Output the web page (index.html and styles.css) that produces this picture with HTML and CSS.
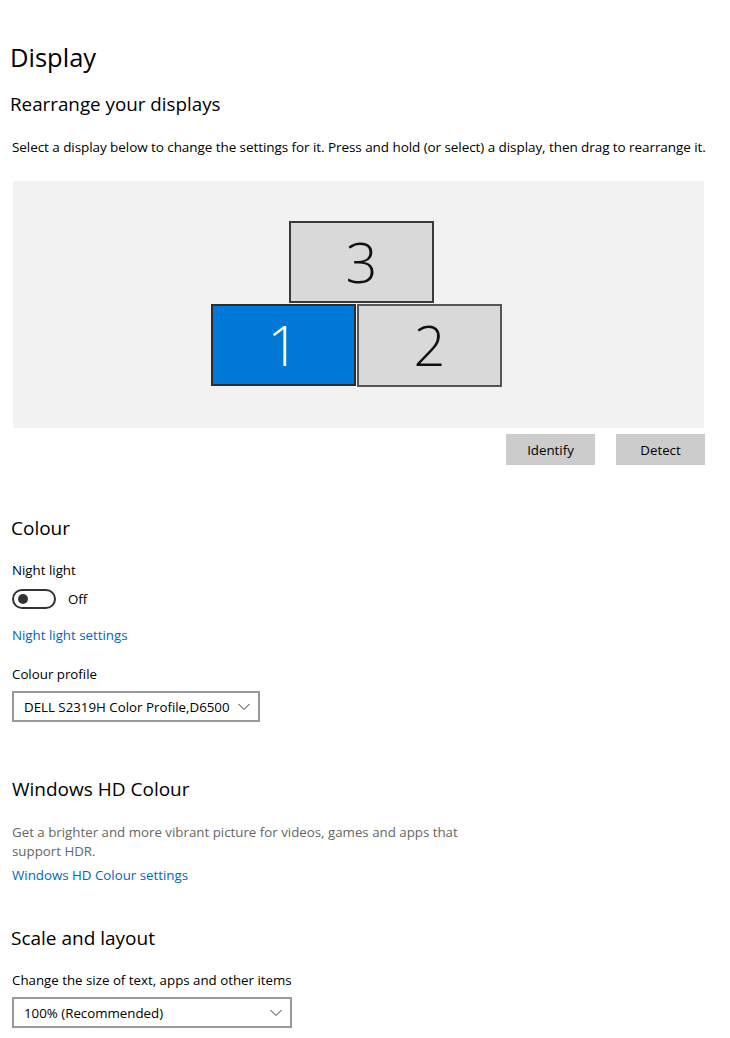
FILE: index.html
```html
<!DOCTYPE html>
<html>
<head>
<meta charset="utf-8">
<link rel="stylesheet" href="styles.css">
</head>
<body>
<div class="page">
  <h1 class="title">Display</h1>
  <h2 class="sub">Rearrange your displays</h2>
  <p class="desc">Select a display below to change the settings for it. Press and hold (or select) a display, then drag to rearrange it.</p>
  <div class="canvas">
    <div class="mon mon3">3</div>
    <div class="mon mon1">1</div>
    <div class="mon mon2">2</div>
  </div>
  <div class="btnrow">
    <button class="btn">Identify</button>
    <button class="btn">Detect</button>
  </div>

  <section class="sec colour">
    <h2 class="sechead">Colour</h2>
    <div class="label nl-label">Night light</div>
    <div class="toggle-row">
      <span class="toggle"><span class="knob"></span></span>
      <span class="toggle-text">Off</span>
    </div>
    <a class="link nl-link">Night light settings</a>
    <div class="label profile-label">Colour profile</div>
    <div class="select sel-profile">
      <span>DELL S2319H Color Profile,D6500</span>
      <svg class="chev" width="12" height="8" viewBox="0 0 12 8"><path d="M0.5 1 L6 6.5 L11.5 1" fill="none" stroke="#333" stroke-width="1"/></svg>
    </div>
  </section>

  <section class="sec hd">
    <h2 class="sechead">Windows HD Colour</h2>
    <p class="gray">Get a brighter and more vibrant picture for videos, games and apps that support HDR.</p>
    <a class="link hd-link">Windows HD Colour settings</a>
  </section>

  <section class="sec scale">
    <h2 class="sechead">Scale and layout</h2>
    <div class="label scale-label">Change the size of text, apps and other items</div>
    <div class="select sel-scale">
      <span>100% (Recommended)</span>
      <svg class="chev" width="12" height="8" viewBox="0 0 12 8"><path d="M0.5 1 L6 6.5 L11.5 1" fill="none" stroke="#333" stroke-width="1"/></svg>
    </div>
  </section>
</div>
</body>
</html>
```
FILE: styles.css
```css
* { box-sizing: border-box; }
html, body { margin: 0; padding: 0; background: #fff; }
body {
  font-family: "Open Sans", "Noto Sans", "Liberation Sans", sans-serif;
  color: #000;
  font-size: 13.3px;
}
.page { padding: 0 0 0 10px; width: 730px; }
.title {
  font-weight: 400;
  font-size: 25.5px;
  margin: 0;
  padding-top: 39px;
  line-height: 36px;
}
.sub {
  font-weight: 400;
  font-size: 18.8px;
  margin: 0;
  padding-top: 16px;
  line-height: 26px;
}
.desc {
  margin: 0;
  padding: 20px 0 0 2px;
  font-size: 13.5px;
  line-height: 20px;
  letter-spacing: -0.07px;
  white-space: nowrap;
}
.canvas {
  position: relative;
  margin: 24px 0 0 3px;
  width: 691px;
  height: 247px;
  background: #f2f2f2;
}
.mon {
  position: absolute;
  width: 145px;
  height: 82px;
  border: 2px solid #3a3a3a;
  background: #d9d9d9;
  font-family: "Open Sans", sans-serif;
  font-weight: 300;
  font-size: 56px;
  line-height: 76px;
  text-align: center;
  color: #111;
}
.mon3 { left: 276px; top: 40px; height: 82px; }
.mon1 { left: 198px; top: 123px; background: #0078d7; color: #fff; border-color: #2d2d2d; }
.mon2 { left: 344px; top: 123px; height: 83px; border-color: #555; }
.btnrow {
  display: flex;
  justify-content: flex-end;
  gap: 21px;
  width: 695px;
  margin-top: 6px;
}
.btn {
  width: 89px;
  height: 31px;
  border: 0;
  background: #cccccc;
  font-family: inherit;
  font-size: 13.3px;
  color: #000;
  padding: 0;
}
.sec { padding-left: 1px; }
.sechead {
  font-weight: 400;
  font-size: 19px;
  margin: 0;
  line-height: 26px;
}
.colour { padding-top: 50px; }
.label { padding-left: 1px; line-height: 18px; }
.nl-label { margin-top: 20px; }
.toggle-row { display: flex; align-items: center; margin: 10px 0 0 1px; }
.toggle {
  width: 44px;
  height: 20px;
  border: 2px solid #333;
  border-radius: 10px;
  display: flex;
  align-items: center;
  padding-left: 4px;
}
.knob { width: 10px; height: 10px; border-radius: 50%; background: #333; }
.toggle-text { margin-left: 12px; }
.link {
  display: block;
  color: #0067c0;
  line-height: 18px;
  padding-left: 1px;
}
.nl-link { margin-top: 17px; }
.profile-label { margin-top: 21px; }
.select {
  margin-left: 1px;
  height: 31px;
  border: 2px solid #999;
  display: flex;
  align-items: center;
  justify-content: space-between;
  padding: 0 8px 0 10px;
}
.sel-profile { width: 248px; margin-top: 8px; }
.sel-scale { width: 280px; margin-top: 8px; }
.hd { padding-top: 54px; padding-left: 2px; }
.gray {
  margin: 21px 0 0 0;
  color: #666;
  width: 470px;
  line-height: 19px;
}
.hd-link { margin-top: 5px; padding-left: 0; }
.scale { padding-top: 41px; }
.scale-label { margin-top: 20px; }
```
